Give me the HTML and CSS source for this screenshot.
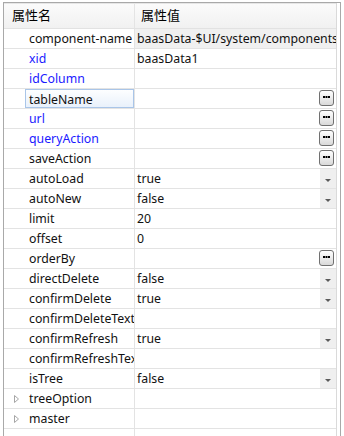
FILE: index.html
```html
<!DOCTYPE html>
<html lang="zh-CN">
<head>
  <meta charset="UTF-8">
  <title>属性</title>
  <link rel="stylesheet" href="styles.css">
</head>
<body>

  <div class="panel">
    <div class="grid">
      <div class="head">
        <div class="head-name">属性名</div>
        <div class="head-value">属性值</div>
      </div>

      <div class="row">
        <div class="name"><span class="gutter"></span><span class="label">component-name</span></div>
        <div class="value readonly"><span class="text">baasData-$UI/system/components/justep/data/baasData</span></div>
      </div>
      <div class="row">
        <div class="name"><span class="gutter"></span><span class="label blue">xid</span></div>
        <div class="value"><span class="text">baasData1</span></div>
      </div>
      <div class="row">
        <div class="name"><span class="gutter"></span><span class="label blue">idColumn</span></div>
        <div class="value"><span class="text"></span></div>
      </div>
      <div class="row">
        <div class="name"><span class="gutter"></span><span class="label selected">tableName</span></div>
        <div class="value"><span class="text"></span><span class="btn"><svg width="7" height="2" viewBox="0 0 7 2"><rect x="0" y="0" width="2" height="2" fill="#000"/><rect x="2.5" y="0" width="2" height="2" fill="#000"/><rect x="5" y="0" width="2" height="2" fill="#000"/></svg></span></div>
      </div>
      <div class="row">
        <div class="name"><span class="gutter"></span><span class="label blue">url</span></div>
        <div class="value"><span class="text"></span><span class="btn"><svg width="7" height="2" viewBox="0 0 7 2"><rect x="0" y="0" width="2" height="2" fill="#000"/><rect x="2.5" y="0" width="2" height="2" fill="#000"/><rect x="5" y="0" width="2" height="2" fill="#000"/></svg></span></div>
      </div>
      <div class="row">
        <div class="name"><span class="gutter"></span><span class="label blue">queryAction</span></div>
        <div class="value"><span class="text"></span><span class="btn"><svg width="7" height="2" viewBox="0 0 7 2"><rect x="0" y="0" width="2" height="2" fill="#000"/><rect x="2.5" y="0" width="2" height="2" fill="#000"/><rect x="5" y="0" width="2" height="2" fill="#000"/></svg></span></div>
      </div>
      <div class="row">
        <div class="name"><span class="gutter"></span><span class="label">saveAction</span></div>
        <div class="value"><span class="text"></span><span class="btn"><svg width="7" height="2" viewBox="0 0 7 2"><rect x="0" y="0" width="2" height="2" fill="#000"/><rect x="2.5" y="0" width="2" height="2" fill="#000"/><rect x="5" y="0" width="2" height="2" fill="#000"/></svg></span></div>
      </div>
      <div class="row">
        <div class="name"><span class="gutter"></span><span class="label">autoLoad</span></div>
        <div class="value"><span class="text">true</span><span class="drop"><span class="arrow"></span></span></div>
      </div>
      <div class="row">
        <div class="name"><span class="gutter"></span><span class="label">autoNew</span></div>
        <div class="value"><span class="text">false</span><span class="drop"><span class="arrow"></span></span></div>
      </div>
      <div class="row">
        <div class="name"><span class="gutter"></span><span class="label">limit</span></div>
        <div class="value"><span class="text">20</span></div>
      </div>
      <div class="row">
        <div class="name"><span class="gutter"></span><span class="label">offset</span></div>
        <div class="value"><span class="text">0</span></div>
      </div>
      <div class="row">
        <div class="name"><span class="gutter"></span><span class="label">orderBy</span></div>
        <div class="value"><span class="text"></span><span class="btn"><svg width="7" height="2" viewBox="0 0 7 2"><rect x="0" y="0" width="2" height="2" fill="#000"/><rect x="2.5" y="0" width="2" height="2" fill="#000"/><rect x="5" y="0" width="2" height="2" fill="#000"/></svg></span></div>
      </div>
      <div class="row">
        <div class="name"><span class="gutter"></span><span class="label">directDelete</span></div>
        <div class="value"><span class="text">false</span><span class="drop"><span class="arrow"></span></span></div>
      </div>
      <div class="row">
        <div class="name"><span class="gutter"></span><span class="label">confirmDelete</span></div>
        <div class="value"><span class="text">true</span><span class="drop"><span class="arrow"></span></span></div>
      </div>
      <div class="row">
        <div class="name"><span class="gutter"></span><span class="label">confirmDeleteText</span></div>
        <div class="value"><span class="text"></span></div>
      </div>
      <div class="row">
        <div class="name"><span class="gutter"></span><span class="label">confirmRefresh</span></div>
        <div class="value"><span class="text">true</span><span class="drop"><span class="arrow"></span></span></div>
      </div>
      <div class="row">
        <div class="name"><span class="gutter"></span><span class="label">confirmRefreshText</span></div>
        <div class="value"><span class="text"></span></div>
      </div>
      <div class="row">
        <div class="name"><span class="gutter"></span><span class="label">isTree</span></div>
        <div class="value"><span class="text">false</span><span class="drop"><span class="arrow"></span></span></div>
      </div>
      <div class="row">
        <div class="name"><span class="gutter"><svg width="5" height="8" viewBox="0 0 5 8"><polygon points="0.5,0.5 4.5,4 0.5,7.5" fill="none" stroke="#a6a6a6"/></svg></span><span class="label">treeOption</span></div>
        <div class="value"><span class="text"></span></div>
      </div>
      <div class="row">
        <div class="name"><span class="gutter"><svg width="5" height="8" viewBox="0 0 5 8"><polygon points="0.5,0.5 4.5,4 0.5,7.5" fill="none" stroke="#a6a6a6"/></svg></span><span class="label">master</span></div>
        <div class="value"><span class="text"></span></div>
      </div>
      <div class="row">
        <div class="name"><span class="gutter"></span><span class="label"></span></div>
        <div class="value"><span class="text"></span></div>
      </div>
    </div>
  </div>

</body>
</html>
```

FILE: styles.css
```css
body {
  margin: 0;
  background: #fff;
  font-family: "Noto Sans", "Noto Sans CJK SC", sans-serif;
  font-size: 12.3px;
  color: #111;
  height: 436px;
  overflow: hidden;
}

.panel {
  margin: 2px 0 0 3px;
  width: 333px;
  border: 1px solid #a9a9a9;
  border-bottom: none;
  padding-right: 3px;
  height: 440px;
}

.grid {
  border-right: 1px solid #dadada;
  height: 100%;
}

.head {
  display: flex;
  height: 24px;
  border-top: 1px solid #e6e6e6;
  border-bottom: 1px solid #e2e2e2;
  background: linear-gradient(#fbfbfb, #f1f1f1);
  font-family: "Noto Sans CJK SC", sans-serif;
  font-size: 13px;
  line-height: 22px;
  color: #000;
}

.head-name {
  width: 122px;
  padding-left: 8px;
  border-right: 1px solid #e4e4e4;
}

.head-value {
  padding-left: 6px;
}

.row {
  display: flex;
  height: 19px;
  border-bottom: 1px solid #e3e3e3;
  line-height: 20px;
}

.name {
  display: flex;
  width: 130px;
  border-right: 1px solid #e3e3e3;
  overflow: hidden;
  white-space: nowrap;
}

.gutter {
  width: 21px;
  flex-shrink: 0;
  display: flex;
  align-items: center;
  justify-content: center;
  padding-left: 4px;
  box-sizing: border-box;
}

.label {
  flex: 1;
  padding-left: 4px;
  overflow: hidden;
}

.label.blue {
  color: #1a1aff;
}

.label.selected {
  border: 1px solid #a9c5e8;
  padding-left: 3px;
  line-height: 19px;
  background: linear-gradient(#fdfeff, #e9f1fb);
}

.value {
  flex: 1;
  display: flex;
  min-width: 0;
  white-space: nowrap;
}

.value.readonly {
  background: #f0f0f0;
}

.text {
  flex: 1;
  padding-left: 2px;
  overflow: hidden;
}

.btn {
  width: 13px;
  height: 9px;
  margin: 1px 2px 0 0;
  padding-top: 5px;
  border: 1px solid #707070;
  border-radius: 3px;
  background: linear-gradient(#ffffff, #d9d9d9);
  display: flex;
  justify-content: center;
}

.btn svg {
  display: block;
}

.drop {
  width: 16px;
  background: #efefef;
  display: flex;
  align-items: center;
  justify-content: center;
}

.arrow {
  width: 0;
  height: 0;
  margin-top: 3px;
  border-left: 3px solid transparent;
  border-right: 3px solid transparent;
  border-top: 3px solid #5a5a5a;
}
```
